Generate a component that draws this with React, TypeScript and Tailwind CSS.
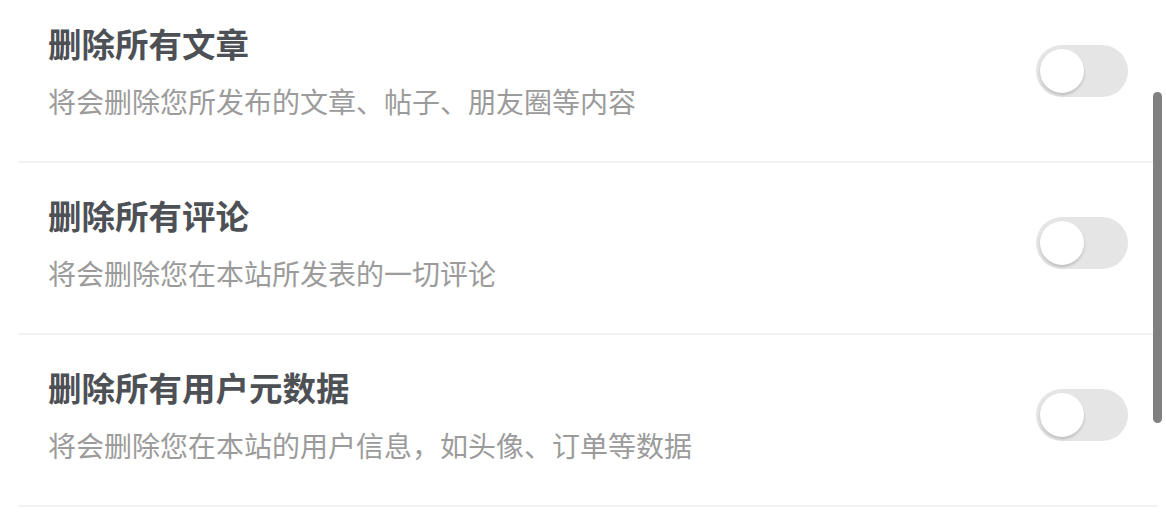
import { useState } from "react";

const items = [
  { title: "删除所有文章", desc: "将会删除您所发布的文章、帖子、朋友圈等内容" },
  { title: "删除所有评论", desc: "将会删除您在本站所发表的一切评论" },
  { title: "删除所有用户元数据", desc: "将会删除您在本站的用户信息，如头像、订单等数据" },
];

function Toggle({ on, onClick }: { on: boolean; onClick: () => void }) {
  return (
    <button
      onClick={onClick}
      className={`relative w-[92px] h-[52px] rounded-full shrink-0 transition-colors ${on ? "bg-[#4cd964]" : "bg-[#e5e5e5]"}`}
    >
      <span
        className={`absolute top-[4px] w-[44px] h-[44px] rounded-full bg-white shadow-[0_2px_3px_rgba(0,0,0,0.18)] transition-all ${on ? "left-[44px]" : "left-[4px]"}`}
      />
    </button>
  );
}

export default function App() {
  const [state, setState] = useState<boolean[]>([false, false, false]);

  return (
    <div
      className="relative w-[1166px] h-[512px] overflow-hidden bg-white"
      style={{ fontFamily: '"Noto Sans CJK SC", "Noto Sans", sans-serif' }}
    >
      <div className="flex flex-col mx-[18px] w-[1140px] -mt-[9px]">
        {items.map((item, i) => (
          <div
            key={item.title}
            className="flex items-center justify-between px-[30px] pt-[30px] pb-[40px] border-b-2 border-[#f2f2f2]"
          >
            <div className="flex flex-col">
              <span className="text-[33.5px] leading-[44px] font-bold text-[#4d5055]">{item.title}</span>
              <span className="mt-[16px] text-[28px] leading-[40px] text-[#9b9b9b]">{item.desc}</span>
            </div>
            <Toggle
              on={state[i]}
              onClick={() => setState(s => s.map((v, j) => (j === i ? !v : v)))}
            />
          </div>
        ))}
      </div>

      {/* overlay scrollbar */}
      <div className="absolute left-[1153px] top-[92px] w-[9px] h-[331px] rounded-full bg-[#808080]" />
    </div>
  );
}
